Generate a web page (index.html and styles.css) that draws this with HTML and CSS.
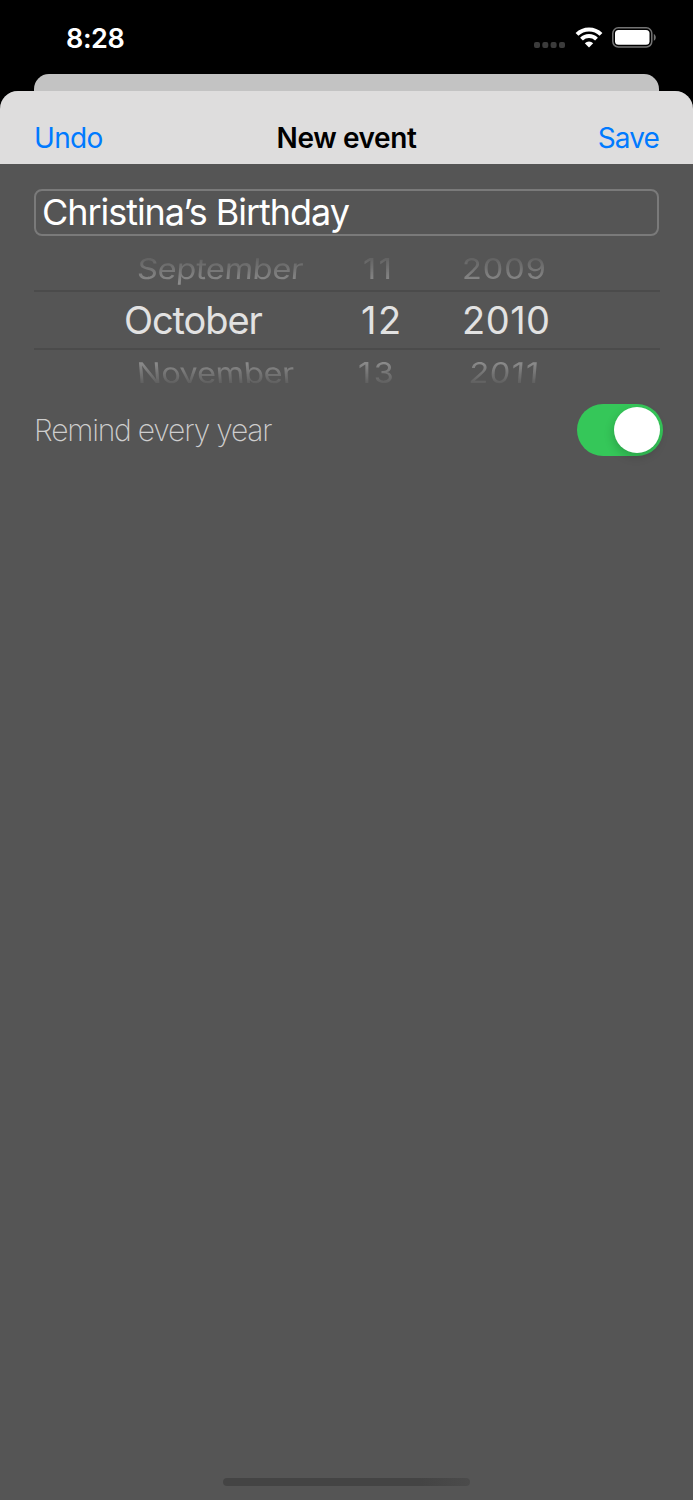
FILE: index.html
```html
<!DOCTYPE html>
<html lang="en">
<head>
<meta charset="utf-8">
<title>New event</title>
<link rel="stylesheet" href="styles.css">
</head>
<body>
<main class="screen">
  <header class="status">
    <span class="time">8:28</span>
    <div class="indicators">
      <svg class="signal" width="31" height="6" viewBox="0 0 31 6" fill="#3b3b3b"><rect width="6" height="6" rx="2"/><rect x="8.3" width="6" height="6" rx="2"/><rect x="16.6" width="6" height="6" rx="2"/><rect x="25" width="6" height="6" rx="2"/></svg>
      <svg class="wifi" width="28" height="21" viewBox="0 0 28 21" fill="none" stroke="#fff" stroke-width="4"><path d="M2 7.4a17 17 0 0 1 24 0"/><path d="M6.5 12.1a10.7 10.7 0 0 1 15 0"/><path d="M14 20.6l-4.2-4.3a6 6 0 0 1 8.4 0z" fill="#fff" stroke="none"/></svg>
      <svg class="battery" width="44" height="21" viewBox="0 0 44 21"><rect x=".8" y=".8" width="39" height="19.2" rx="5.5" fill="none" stroke="#747474" stroke-width="1.5"/><rect x="3" y="3" width="34.5" height="14.8" rx="3.5" fill="#fff"/><path d="M41.8 7c2.6 1.2 2.6 5.6 0 6.8z" fill="#747474"/></svg>
    </div>
  </header>
  <div class="back-card"></div>
  <section class="sheet">
    <nav class="navbar">
      <a class="action undo">Undo</a>
      <h1 class="title">New event</h1>
      <a class="action save">Save</a>
    </nav>
    <div class="field"><span class="field-text">Christina’s Birthday</span></div>
    <div class="picker">
      <div class="row before"><span class="month">September</span><span class="day">11</span><span class="year">2009</span></div>
      <div class="row current"><span class="month">October</span><span class="day">12</span><span class="year">2010</span></div>
      <div class="row after"><span class="month">November</span><span class="day">13</span><span class="year">2011</span></div>
    </div>
    <div class="reminder">
      <span class="reminder-label">Remind every year</span>
      <span class="toggle"><span class="knob"></span></span>
    </div>
    <div class="home-bar"></div>
  </section>
</main>
</body>
</html>
```
FILE: styles.css
```css
* { box-sizing: border-box; }
body { margin: 0; background: #000; font-family: Inter, "Liberation Sans", sans-serif; }
.screen { display: flex; flex-direction: column; width: 693px; height: 1500px; overflow: hidden; background: #000; }
.status { display: flex; justify-content: space-between; height: 74px; padding: 27px 37px 0 66px; color: #fff; }
.time { font-size: 27px; line-height: 24px; font-weight: 600; letter-spacing: -.4px; }
.indicators { display: flex; align-items: flex-start; }
.signal { margin: 15px 10px 0 0; }
.wifi { margin-right: 9px; }
.back-card { height: 17px; margin: 0 34px; background: #c3c3c3; border-radius: 15px 15px 0 0; }
.sheet { display: flex; flex-direction: column; height: 1409px; background: #555; border-radius: 18px 18px 0 0; overflow: hidden; }
.navbar { display: grid; grid-template-columns: 1fr auto 1fr; flex: none; height: 73px; padding: 30px 34px 0; background: #dedddd; line-height: 34px; }
.action { font-size: 28px; color: #007aff; letter-spacing: -.7px; }
.save { text-align: right; letter-spacing: -.9px; }
.title { margin: 0; font-size: 28px; font-weight: 600; color: #000; letter-spacing: -.4px; }
.field { flex: none; height: 47px; margin: 25px 34px 0; padding-left: 6px; border: 2px solid #7a7a7a; border-radius: 8px; color: #fff; line-height: 42px; }
.field-text { font-size: 36px; letter-spacing: -1.05px; }
.picker { flex: none; margin: 18px 33px 0 34px; height: 134px; }
.row { display: grid; white-space: nowrap; }
.current { height: 60px; padding-left: 90px; grid-template-columns: 237px 101px 1fr; border-top: 2px solid #4b4b4b; border-bottom: 2px solid #4b4b4b; font-size: 38px; line-height: 56px; color: #e2e2e2; letter-spacing: .5px; }
.current .month { letter-spacing: -1.1px; }
.current .day { letter-spacing: 1.5px; }
.before, .after { font-size: 32.500px; transform: scaleY(.88); color: #999; }
.before .month, .after .month { letter-spacing: -.3px; }
.before .day, .after .day { letter-spacing: 2.5px; }
.before .year, .after .year { letter-spacing: 1px; }
.before .month { transform: skewX(-4deg); }
.after .month { transform: skewX(4deg); }
.after .year { transform: skewX(-4deg); }
.before { height: 36px; padding-left: 103px; grid-template-columns: 226px 99px 1fr; line-height: 30px; -webkit-mask-image: linear-gradient(rgba(0, 0, 0, .15) 0, rgba(0, 0, 0, .85) 90%); mask-image: linear-gradient(rgba(0, 0, 0, .15) 0, rgba(0, 0, 0, .85) 90%); }
.after { height: 40px; padding-left: 103px; grid-template-columns: 221px 111px 1fr; line-height: 47px; -webkit-mask-image: linear-gradient(#000 10%, rgba(0, 0, 0, .08) 95%); mask-image: linear-gradient(#000 10%, rgba(0, 0, 0, .08) 95%); }
.reminder { display: flex; flex: none; align-items: center; justify-content: space-between; height: 52px; margin: 15.5px 30px 0 34px; }
.reminder-label { font-size: 30px; font-weight: 200; color: #cecece; letter-spacing: -1.2px; }
.toggle { display: flex; justify-content: flex-end; width: 86px; height: 52px; padding: 3px; border-radius: 26px; background: #35c759; }
.knob { width: 46px; height: 46px; border-radius: 50%; background: #fff; box-shadow: -1px 4px 10px rgba(0, 0, 0, .18); }
.home-bar { flex: none; width: 247px; height: 8px; margin: auto auto 14px 223px; border-radius: 4px; background: linear-gradient(90deg, #444 80%, #4b4b4b); }
```
